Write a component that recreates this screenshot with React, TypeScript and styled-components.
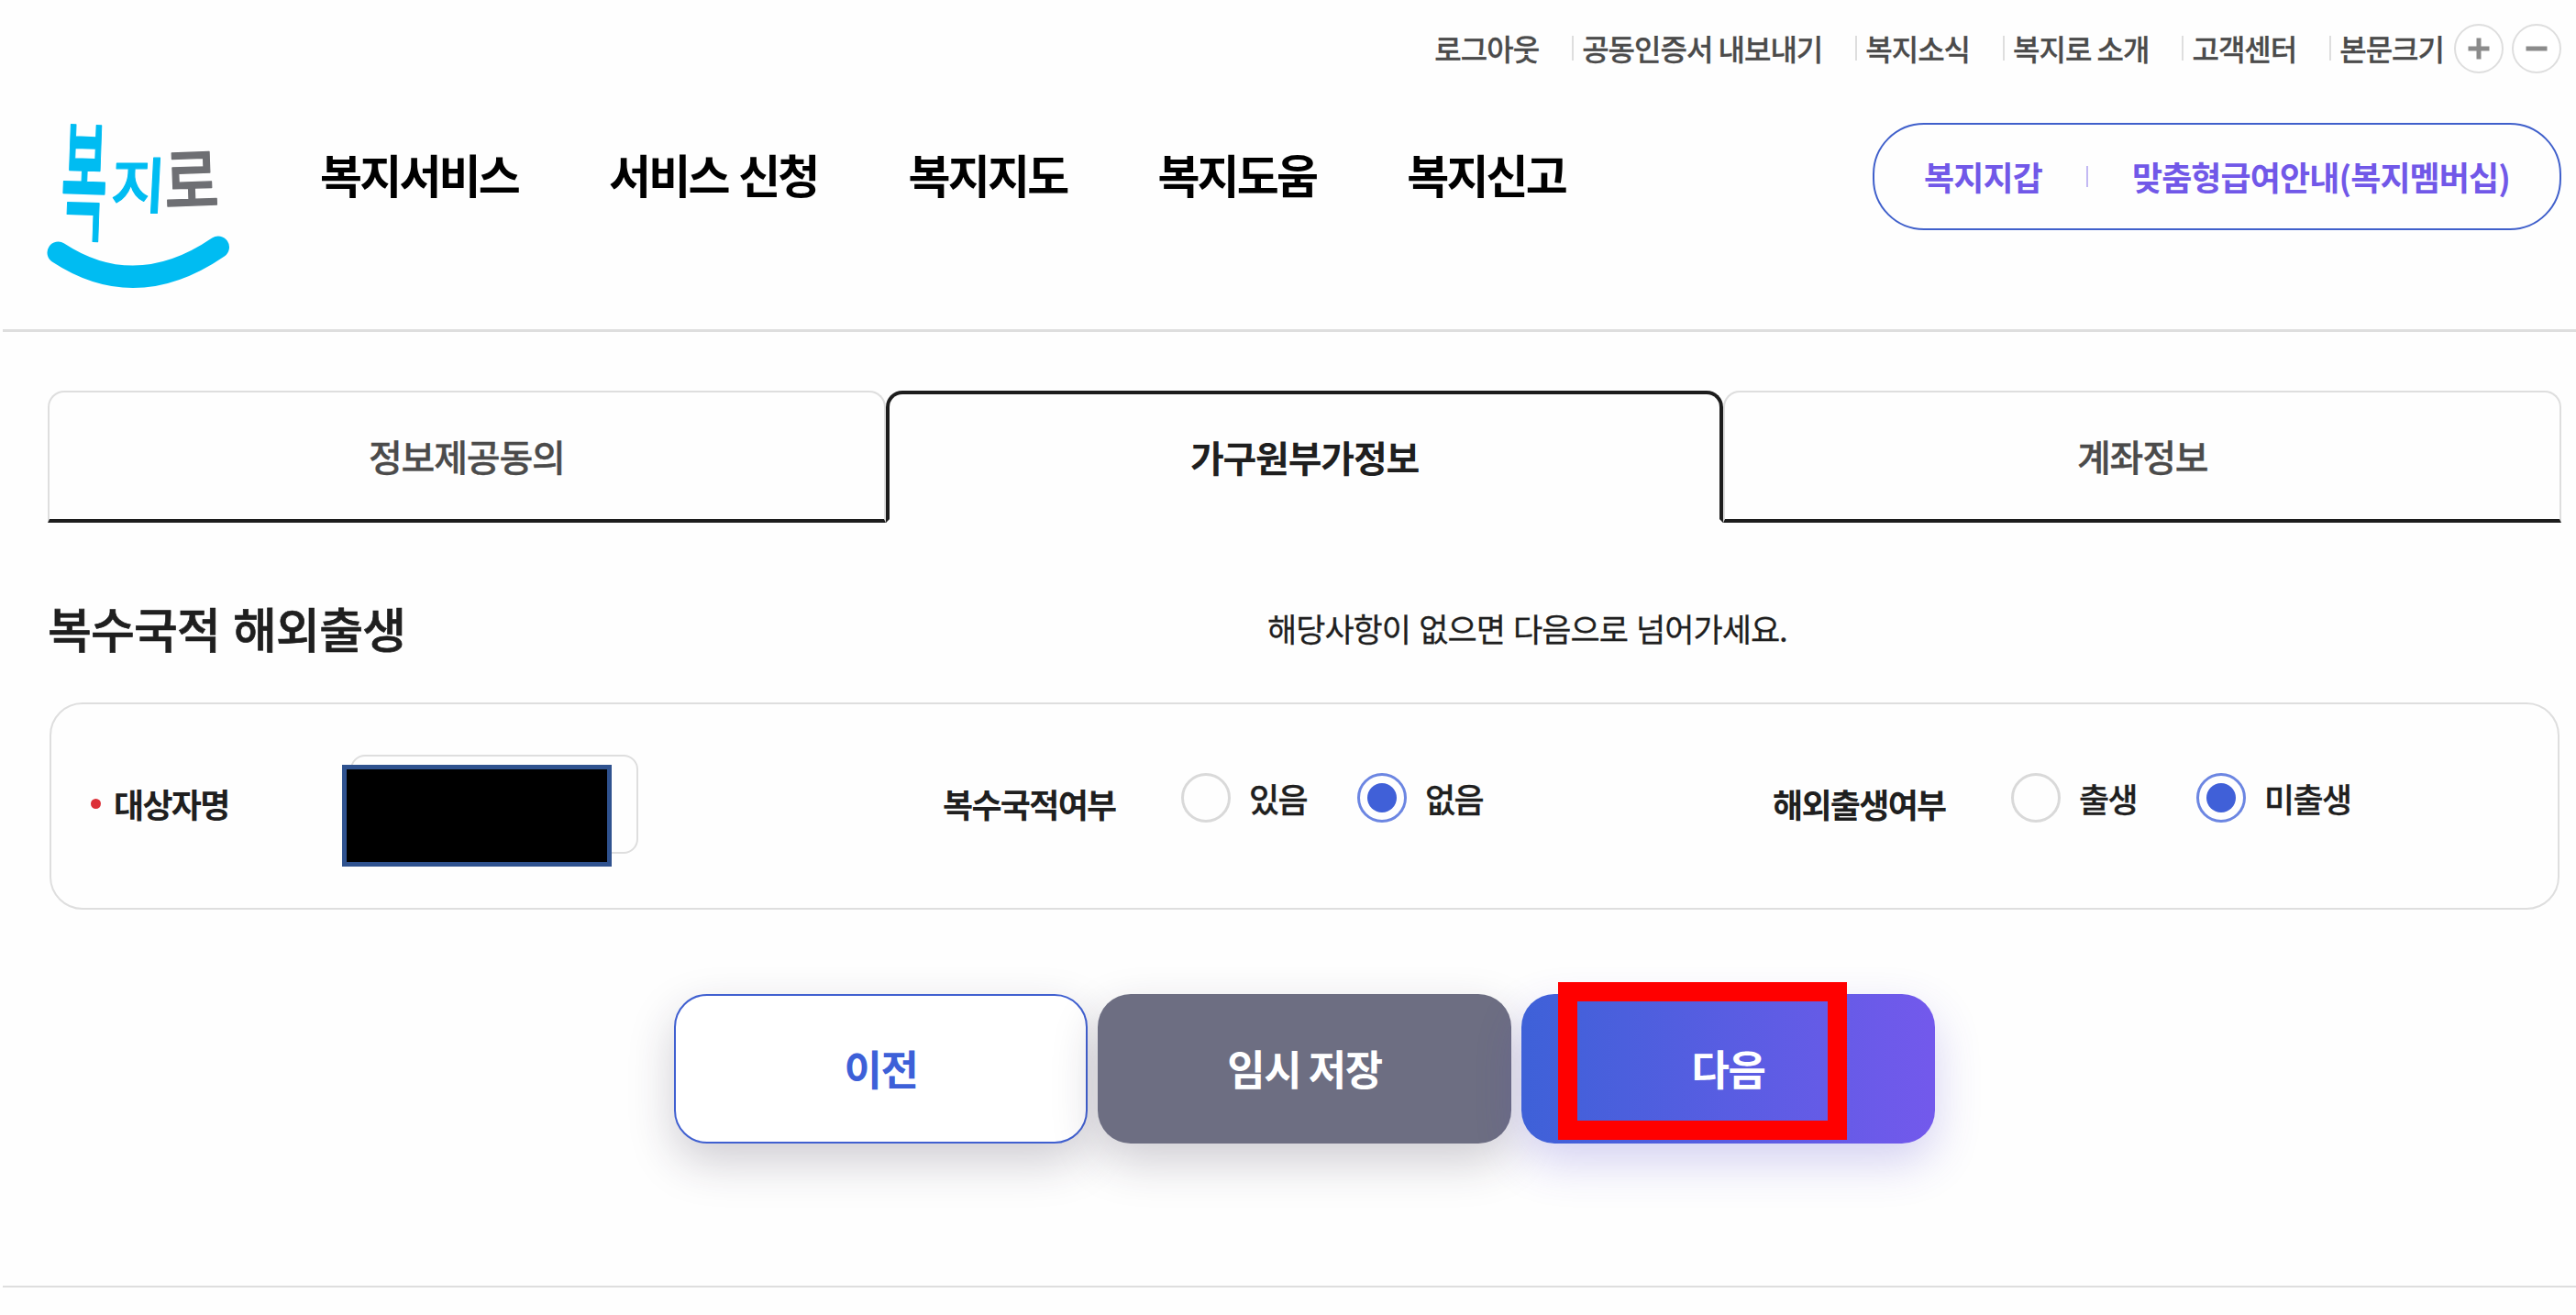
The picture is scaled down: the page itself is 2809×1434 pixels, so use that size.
import React, { useState } from "react";
import styled, { createGlobalStyle, css } from "styled-components";

const GlobalStyle = createGlobalStyle`
  * { box-sizing: border-box; }
  body {
    margin: 0;
    background: #fefefe;
    color: #1f1f1f;
    font-family: "Noto Sans CJK KR", "Noto Sans", sans-serif;
  }
  button { font-family: inherit; cursor: pointer; }
`;

const mediumWeight = css`
  font-weight: 500;
  -webkit-text-stroke: 0.008em currentColor;
`;

const Page = styled.div`
  width: 2809px;
  height: 1434px;
  overflow: hidden;
  display: flex;
  flex-direction: column;
`;

const Header = styled.header`
  height: 362px;
  margin-left: 3px;
  padding: 25px 16px 0 49px;
  border-bottom: 3px solid #dedede;
`;

const UtilityBar = styled.div`
  height: 55px;
  display: flex;
  justify-content: flex-end;
  align-items: center;
`;

const UtilityLink = styled.a<{ $first?: boolean }>`
  display: flex;
  align-items: center;
  margin-left: ${(p) => (p.$first ? 0 : 36)}px;
  padding-bottom: 1px;
  font-size: 32px;
  line-height: 50px;
  ${mediumWeight}
  letter-spacing: -1px;
  color: #4b4b4b;
  white-space: nowrap;

  ${(p) =>
    !p.$first &&
    css`
      &::before {
        content: "";
        width: 2px;
        height: 27px;
        margin-right: 9px;
        background: #dedede;
      }
    `}
`;

const ZoomButton = styled.button<{ $gap: number }>`
  width: 54px;
  height: 54px;
  margin-left: ${(p) => p.$gap}px;
  padding: 0;
  display: grid;
  place-items: center;
  border: 2px solid #dedede;
  border-radius: 50%;
  background: #fff;
`;

const HeaderMain = styled.div`
  display: flex;
  align-items: flex-start;
  margin-top: 54px;
`;

const Logo = styled.svg`
  width: 200px;
  height: 182px;
  flex: none;
  overflow: visible;
`;

const MainNav = styled.nav`
  display: flex;
  gap: 99px;
  margin: 19px 0 0 97px;
`;

const MainLink = styled.a`
  font-size: 50px;
  line-height: 72px;
  font-weight: 700;
  letter-spacing: -2.8px;
  word-spacing: 3px;
  color: #000;
  white-space: nowrap;
`;

const WalletBox = styled.div`
  width: 751px;
  height: 117px;
  margin-left: auto;
  padding: 0 54px 1px;
  display: flex;
  align-items: center;
  justify-content: space-between;
  border: 2px solid #4060cb;
  border-radius: 56px;
`;

const WalletLink = styled.a`
  font-size: 36px;
  line-height: 52px;
  font-weight: 700;
  letter-spacing: -0.9px;
  color: #7158e8;
  white-space: nowrap;
`;

const WalletDivider = styled.span`
  width: 2px;
  height: 23px;
  background: #c3b9f3;
`;

const Tabs = styled.div`
  display: grid;
  grid-template-columns: repeat(3, 1fr);
  width: 2741px;
  height: 144px;
  margin: 64px 0 0 52px;
  flex: none;
`;

const Tab = styled.button<{ $active: boolean }>`
  padding: 0;
  background: transparent;
  font-size: 40px;
  line-height: 58px;
  letter-spacing: -1.2px;
  border-style: solid;
  border-radius: 18px 18px 0 0;
  ${(p) =>
    p.$active
      ? css`
          border-width: 4px;
          border-color: #1d1d1d #1d1d1d transparent;
          color: #1f1f1f;
          font-weight: 700;
        `
      : css`
          border-width: 2px 2px 4px;
          border-color: #dedede #dedede #1d1d1d;
          color: #4b4b4b;
          ${mediumWeight}
        `}
`;

const SectionHead = styled.div`
  display: flex;
  align-items: center;
  height: 76px;
  margin: 77px 0 0 52px;
  flex: none;
`;

const SectionTitle = styled.h2`
  width: 1330px;
  margin: 0;
  font-size: 52px;
  line-height: 76px;
  font-weight: 500;
  -webkit-text-stroke: 0.014em currentColor;
  letter-spacing: -0.8px;
  word-spacing: 3px;
`;

const SectionNote = styled.p`
  margin: 0;
  font-size: 35px;
  line-height: 50px;
  font-weight: 400;
  -webkit-text-stroke: 0.008em currentColor;
  letter-spacing: -1px;
  word-spacing: 2.4px;
`;

const FormCard = styled.section`
  width: 2737px;
  height: 226px;
  margin: 43px 0 0 54px;
  padding: 0 40px 0 43px;
  display: grid;
  grid-template-columns: 929px 905px 1fr;
  align-items: start;
  border: 2px solid #dedede;
  border-radius: 36px;
  flex: none;
`;

const Field = styled.div`
  display: flex;
  align-items: flex-start;
`;

const FieldLabel = styled.span<{ $width: number }>`
  width: ${(p) => p.$width}px;
  display: flex;
  align-items: center;
  margin-top: 82px;
  font-size: 36px;
  line-height: 52px;
  font-weight: 700;
  letter-spacing: -1.7px;
  white-space: nowrap;
`;

const RequiredDot = styled.i`
  width: 11px;
  height: 11px;
  margin-right: 14px;
  border-radius: 50%;
  background: #dc3038;
`;

const NameBox = styled.div`
  position: relative;
  width: 314px;
  height: 108px;
  margin-top: 55px;
  border: 2px solid #dedede;
  border-radius: 16px;
`;

const Redaction = styled.span`
  position: absolute;
  left: -11px;
  top: 9px;
  width: 294px;
  height: 111px;
  border: 5px solid #2f528f;
  background: #000;
`;

const Choices = styled.div<{ $gap: number }>`
  display: flex;
  gap: ${(p) => p.$gap}px;
  margin-top: 75px;
`;

const Choice = styled.label`
  display: flex;
  align-items: center;
  gap: 20px;
  height: 54px;
  font-size: 36px;
  line-height: 52px;
  ${mediumWeight}
  letter-spacing: -1.6px;
  white-space: nowrap;
  cursor: pointer;
`;

const RadioMark = styled.span<{ $checked: boolean }>`
  width: 54px;
  height: 54px;
  display: grid;
  place-items: center;
  border: 3px solid ${(p) => (p.$checked ? "#6c86e2" : "#d9d9d9")};
  border-radius: 50%;

  &::after {
    content: "";
    width: 32px;
    height: 32px;
    border-radius: 50%;
    background: ${(p) => (p.$checked ? "#4060d8" : "transparent")};
  }
`;

const Actions = styled.div`
  display: flex;
  gap: 11px;
  margin: 92px 0 0 735px;
  flex: none;
`;

const ActionButton = styled.button<{ $kind: "outline" | "gray" | "primary" }>`
  position: relative;
  width: 451px;
  height: 163px;
  padding: 0 0 1px;
  border: 0;
  border-radius: 36px;
  font-size: 45px;
  line-height: 66px;
  font-weight: 700;
  letter-spacing: -1.5px;
  color: #fff;
  box-shadow: 0 20px 50px rgba(40, 32, 60, 0.22);

  ${(p) =>
    p.$kind === "outline" &&
    css`
      border: 2px solid #4060d0;
      background: #fff;
      color: #3d60d8;
    `}
  ${(p) => p.$kind === "gray" && css`background: #6d6e82;`}
  ${(p) =>
    p.$kind === "primary" &&
    css`
      background: linear-gradient(90deg, #3e61d8, #7359ec);
      box-shadow: 0 20px 50px rgba(76, 64, 200, 0.24);
    `}
`;

const Highlight = styled.span`
  position: absolute;
  left: 40px;
  top: -13px;
  width: 315px;
  height: 172px;
  border: 21px solid #ff0000;
`;

const FooterLine = styled.hr`
  width: 2806px;
  height: 2px;
  margin: 155px 0 0 3px;
  border: 0;
  background: #dedede;
  flex: none;
`;

const utilityLinks = ["로그아웃", "공동인증서 내보내기", "복지소식", "복지로 소개", "고객센터", "본문크기"];
const mainLinks = ["복지서비스", "서비스 신청", "복지지도", "복지도움", "복지신고"];
const tabs = ["정보제공동의", "가구원부가정보", "계좌정보"];

function BokjiroLogo() {
  return (
    <Logo viewBox="52 134 200 182" role="img" aria-label="복지로">
      <g fontFamily="Noto Sans CJK KR, sans-serif" fontWeight="500" strokeWidth="1.2" strokeLinejoin="round">
        <text transform="translate(65 250) rotate(2) scale(0.76 1.96)" fontSize="72" fill="#00bcf2" stroke="#00bcf2">복</text>
        <text transform="translate(120 227) skewX(-3) scale(0.98 1)" fontSize="66" fill="#00bcf2" stroke="#00bcf2">지</text>
        <text transform="translate(180 227) rotate(-2) scale(0.98 1.18)" fontSize="66" fill="#6e6f73" stroke="#6e6f73">로</text>
      </g>
      <path d="M63.5 275.5 Q148 331 238 269.5" fill="none" stroke="#00bcf2" strokeWidth="24" strokeLinecap="round" />
    </Logo>
  );
}

interface RadioFieldProps {
  label: string;
  labelWidth: number;
  options: string[];
  gap: number;
}

function RadioField({ label, labelWidth, options, gap }: RadioFieldProps) {
  const [value, setValue] = useState(options[1]);
  return (
    <Field>
      <FieldLabel $width={labelWidth}>{label}</FieldLabel>
      <Choices $gap={gap} role="radiogroup" aria-label={label}>
        {options.map((option) => (
          <Choice key={option} onClick={() => setValue(option)}>
            <RadioMark $checked={option === value} />
            {option}
          </Choice>
        ))}
      </Choices>
    </Field>
  );
}

export default function App() {
  const [activeTab, setActiveTab] = useState(1);
  return (
    <>
      <GlobalStyle />
      <Page>
        <Header>
          <UtilityBar>
            {utilityLinks.map((label, i) => (
              <UtilityLink key={label} $first={i === 0}>{label}</UtilityLink>
            ))}
            <ZoomButton $gap={11} aria-label="확대">
              <svg width="24" height="24" viewBox="0 0 24 24" stroke="#8b8b8b" strokeWidth="5">
                <path d="M0.5 12H23.5M12 0.5V23.5" />
              </svg>
            </ZoomButton>
            <ZoomButton $gap={9} aria-label="축소">
              <svg width="24" height="24" viewBox="0 0 24 24" stroke="#8b8b8b" strokeWidth="5">
                <path d="M0.5 12H23.5" />
              </svg>
            </ZoomButton>
          </UtilityBar>
          <HeaderMain>
            <BokjiroLogo />
            <MainNav>
              {mainLinks.map((label) => (
                <MainLink key={label}>{label}</MainLink>
              ))}
            </MainNav>
            <WalletBox>
              <WalletLink>복지지갑</WalletLink>
              <WalletDivider />
              <WalletLink>맞춤형급여안내(복지멤버십)</WalletLink>
            </WalletBox>
          </HeaderMain>
        </Header>

        <Tabs role="tablist">
          {tabs.map((label, i) => (
            <Tab key={label} role="tab" $active={i === activeTab} onClick={() => setActiveTab(i)}>
              {label}
            </Tab>
          ))}
        </Tabs>

        <SectionHead>
          <SectionTitle>복수국적 해외출생</SectionTitle>
          <SectionNote>해당사항이 없으면 다음으로 넘어가세요.</SectionNote>
        </SectionHead>

        <FormCard>
          <Field>
            <FieldLabel $width={283}>
              <RequiredDot />
              대상자명
            </FieldLabel>
            <NameBox>
              <Redaction />
            </NameBox>
          </Field>
          <RadioField label="복수국적여부" labelWidth={260} options={["있음", "없음"]} gap={55} />
          <RadioField label="해외출생여부" labelWidth={260} options={["출생", "미출생"]} gap={65} />
        </FormCard>

        <Actions>
          <ActionButton $kind="outline">이전</ActionButton>
          <ActionButton $kind="gray">임시 저장</ActionButton>
          <ActionButton $kind="primary">
            다음
            <Highlight />
          </ActionButton>
        </Actions>
        <FooterLine />
      </Page>
    </>
  );
}
